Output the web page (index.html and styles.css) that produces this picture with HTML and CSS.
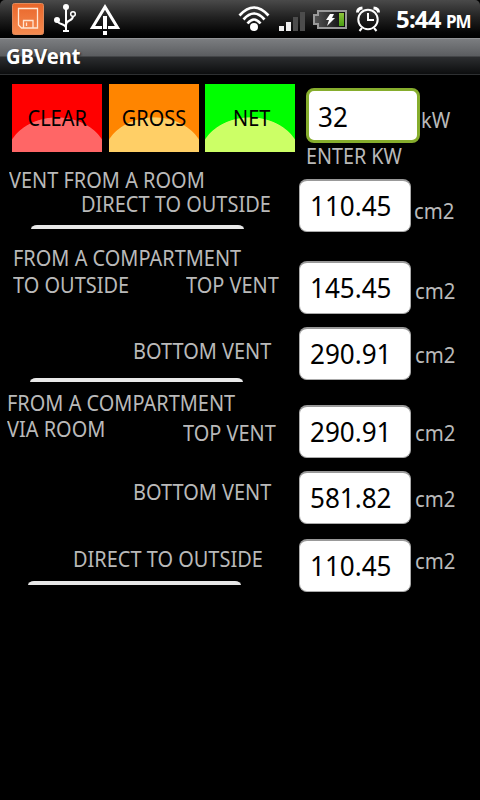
FILE: index.html
```html
<!DOCTYPE html>
<html lang="en">
<head>
<meta charset="utf-8">
<title>GBVent</title>
<link rel="stylesheet" href="styles.css">
</head>
<body>
<header class="status">
  <svg class="icons" width="390" height="38" viewBox="0 0 390 38">
    <defs>
      <linearGradient id="orange" x2="0" y2="1"><stop stop-color="#e9662a"/><stop offset="1" stop-color="#f58b50"/></linearGradient>
      <linearGradient id="cell" x2="1" y2="0"><stop stop-color="#555"/><stop offset="1" stop-color="#080808"/></linearGradient>
      <linearGradient id="green" x2="0" y2="1"><stop stop-color="#8fc43c"/><stop offset="1" stop-color="#489d12"/></linearGradient>
    </defs>
    <rect x="12.500" y="3.500" width="31" height="31" rx="2" fill="url(#orange)" stroke="#e08a5b"/>
    <path d="M18.500 8.500H37.500V28H21.500L18.500 25ZM23.500 28V20.500H33V28M26.500 22.500V26" fill="none" stroke="#ffe5d2" stroke-width="1.300"/>
    <g fill="none" stroke="#fff" stroke-width="2">
      <path d="M66 7V31M57 20C57 25 66 23 66 28M73 16C73 22 66 19 66 25"/>
      <circle cx="73" cy="14" r="2.300" stroke-width="1.500"/>
    </g>
    <circle cx="66" cy="7" r="3" fill="#fff"/><circle cx="57" cy="20" r="3" fill="#fff"/><path d="M63 30h6v2h-6z" fill="#fff"/>
    <path d="M102 27.500H92.500L105 7L117.500 27.500H108" fill="none" stroke="#fff" stroke-width="3"/>
    <path d="M103 16h4v13h-4zM103 31h4v4h-4z" fill="#fff"/>
    <g fill="none" stroke="#fff" stroke-width="2.700">
      <path d="M239.500 15.500Q254 -.5 268.500 15.500M243.500 19.500Q254 7.500 264.500 19.500M247.500 23.500Q254 15.500 260.500 23.500"/>
    </g>
    <circle cx="254" cy="27" r="4" fill="#fff"/>
    <path d="M279 26h5v5h-5zM286 22h5v9h-5z" fill="#eee"/><path d="M293 17h5v14h-5zM300 12h5v19h-5z" fill="#4c4c4c"/>
    <path d="M318 11H346V28H318V24H314V15H318Z" fill="url(#cell)" stroke="#999" stroke-width="2"/>
    <rect x="339" y="13" width="5" height="13" fill="url(#green)"/>
    <path d="M330 14h4l-2 4h3l-8 8l2-6h-3z" fill="#fff"/>
    <g fill="none" stroke="#fff" stroke-width="2">
      <circle cx="368" cy="19.500" r="9.700"/><path d="M368 13V20H374M362 28L359.500 31M374 28L376.500 31"/>
      <path d="M357.500 12.500Q357.500 8.500 362.500 8M378.500 12.500Q378.500 8.500 373.500 8" stroke-width="3"/>
    </g>
  </svg>
  <div class="clock"><span class="time">5:44</span><span class="pm">PM</span></div>
</header>
<div class="title"><span>GBVent</span></div>
<main>
  <div class="top">
    <button class="btn clear"><span>CLEAR</span></button>
    <button class="btn gross"><span>GROSS</span></button>
    <button class="btn net"><span>NET</span></button>
    <div class="entry">
      <div class="entry-row"><div class="field active"><span>32</span></div><span class="label kw">kW</span></div>
      <span class="label enter">ENTER KW</span>
    </div>
  </div>
  <div class="columns">
    <div class="labels">
      <span class="label vent-room">VENT FROM A ROOM</span>
      <span class="label direct">DIRECT TO OUTSIDE</span>
      <hr class="rule rule-a">
      <span class="label comp">FROM A COMPARTMENT</span>
      <div class="pair outside"><span class="label">TO OUTSIDE</span><span class="label">TOP VENT</span></div>
      <span class="label bottom-a">BOTTOM VENT</span>
      <hr class="rule rule-b">
      <span class="label comp-via">FROM A COMPARTMENT</span>
      <div class="pair via"><span class="label">VIA ROOM</span><span class="label top-via">TOP VENT</span></div>
      <span class="label bottom-b">BOTTOM VENT</span>
      <span class="label direct-b">DIRECT TO OUTSIDE</span>
      <hr class="rule rule-c">
    </div>
    <div class="values">
      <div class="field"><span>110.45</span></div>
      <div class="field v2"><span>145.45</span></div>
      <div class="field v3"><span>290.91</span></div>
      <div class="field v4"><span>290.91</span></div>
      <div class="field v3"><span>581.82</span></div>
      <div class="field v6"><span>110.45</span></div>
    </div>
    <div class="units">
      <span class="label unit u1">cm2</span>
      <span class="label unit u2">cm2</span>
      <span class="label unit u3">cm2</span>
      <span class="label unit u4">cm2</span>
      <span class="label unit u5">cm2</span>
      <span class="label unit u6">cm2</span>
    </div>
  </div>
</main>
</body>
</html>
```
FILE: styles.css
```css
* { box-sizing: border-box; }
body {
  margin: 0;
  width: 480px;
  height: 800px;
  overflow: hidden;
  background: #000;
  font-family: "Noto Sans", sans-serif;
}
.status {
  display: flex;
  height: 38px;
  background: linear-gradient(#4a4a4a, #222 45%, #050505 85%, #000);
  border-radius: 5px 5px 0 0;
}
.icons { flex: none; }
.clock {
  display: flex;
  align-items: baseline;
  padding-left: 6px;
  color: #fff;
  font-weight: 700;
  line-height: 38px;
  white-space: nowrap;
}
.time { width: 50px; font-size: 24px; letter-spacing: -.8px; }
.pm { font-size: 17px; letter-spacing: -1px; }
.title {
  height: 37px;
  padding-left: 6px;
  border-top: 1px solid #929496;
  border-bottom: 1px solid #2e3032;
  background: linear-gradient(#7b7d80, #5b5d60 17px, #2c2e30 18px, #0c0d0e);
  color: #fff;
  font-size: 21px;
  font-weight: 700;
  line-height: 34px;
  text-shadow: 1px 1px 2px #222;
}
.title span { display: inline-block; transform: scaleX(.96); transform-origin: left; }
.top { display: flex; height: 93px; padding: 9px 0 0 12px; }
.btn {
  flex: none;
  width: 90px;
  height: 68px;
  margin: 0 7px 0 0;
  padding: 0;
  border: 0;
  color: #000;
  font: 21px/68px "Noto Sans", sans-serif;
}
.btn span { display: inline-block; transform: scaleX(.95); }
.clear { background: radial-gradient(ellipse 51px 41px at 50% 74px, #f66 98%, #f00 100%); }
.gross { margin-right: 6px; background: radial-gradient(ellipse 51px 41px at 50% 74px, #ffcf66 98%, #ff8500 100%); }
.net { margin-right: 11px; background: radial-gradient(ellipse 51px 41px at 50% 74px, #cf6 98%, #0f0 100%); }
.net span { margin-left: 4px; }
.entry { padding-top: 4px; }
.entry-row { display: flex; }
.field {
  flex: none;
  width: 112px;
  height: 53px;
  padding-left: 10px;
  border: 1px solid #aaa;
  border-top: 2px solid #999;
  border-radius: 8px;
  background: #fff;
  color: #000;
  font-size: 27px;
  line-height: 50px;
}
.field span { display: inline-block; transform: scaleX(.965); transform-origin: left; }
.field.active { width: 114px; height: 55px; padding-left: 9px; border: 3px solid #86ad2d; line-height: 51px; }
.label {
  display: block;
  flex: none;
  height: 24px;
  color: #b9b9b9;
  font-size: 21px;
  line-height: 24px;
  white-space: nowrap;
  transform: scaleX(.95);
  transform-origin: left;
}
.kw { margin: 20px 0 0 1px; }
.enter { margin-top: 1px; transform: scaleX(.94); }
.columns { display: flex; }
.labels { width: 299px; flex: none; }
.vent-room { margin-left: 9px; }
.direct { margin-left: 81px; }
.rule {
  width: 213px;
  height: 4px;
  margin: 9px 0 0 31px;
  border: 0;
  border-radius: 6px 6px 0 0 / 4px 4px 0 0;
  background: #e8e8e8;
}
.comp { margin: 17px 0 0 13px; }
.pair { display: flex; justify-content: space-between; }
.outside { margin: 3px 13px 0; width: 271px; }
.bottom-a { margin: 42px 0 0 133px; }
.rule-b { margin: 15px 0 0 30px; }
.comp-via { margin: 9px 0 0 7px; }
.via { margin: 2px 0 0 7px; width: 274px; }
.top-via { margin-top: 4px; }
.bottom-b { margin: 35px 0 0 133px; }
.direct-b { margin: 43px 0 0 73px; }
.rule-c { margin: 10px 0 0 28px; }
.values { width: 115px; flex: none; padding-top: 11px; }
.v2 { margin-top: 29px; }
.v3 { margin-top: 13px; }
.v4 { margin-top: 25px; }
.v6 { margin-top: 15px; }
.units { padding-top: 31px; }
.unit { margin-left: 1px; transform: scaleX(.97); }
.u1 { margin-left: 0; }
.u2 { margin-top: 56px; }
.u3 { margin-top: 40px; }
.u4 { margin-top: 54px; }
.u5 { margin-top: 42px; }
.u6 { margin-top: 38px; }
```
